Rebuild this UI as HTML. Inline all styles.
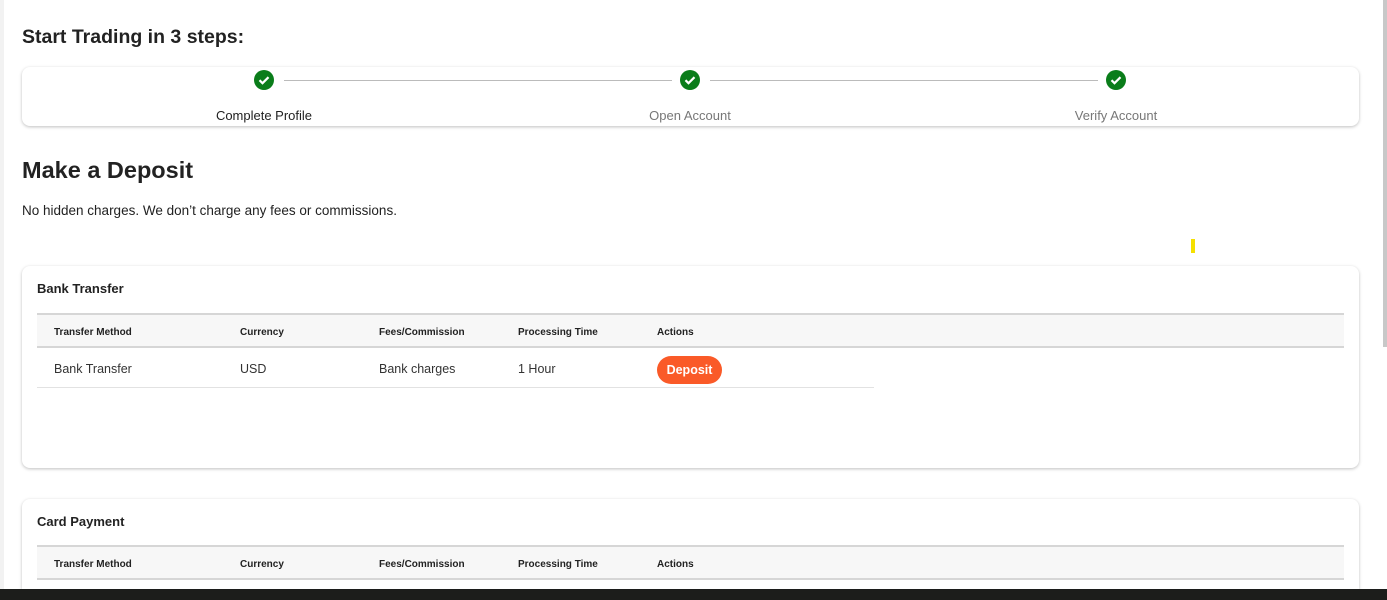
<!DOCTYPE html>
<html style="width:1387px;height:600px;overflow:hidden"><head><style>
*{box-sizing:border-box;margin:0;padding:0}
body{width:1387px;height:600px;overflow:hidden;background:#fff;font-family:"Liberation Sans",sans-serif;color:#222;position:relative}
.abs{position:absolute}
.card{position:absolute;background:#fff;border-radius:8px;box-shadow:0 1px 3px rgba(0,0,0,.25)}
.step{position:absolute;top:107px;font-size:13px;width:200px;text-align:center}
.th{position:absolute;font-size:10px;font-weight:bold;color:#222}
.td{position:absolute;font-size:12.5px;color:#333}
.thead{position:absolute;left:37px;width:1307px;height:35px;background:#f7f7f7;border-top:2px solid #d6d6d6;border-bottom:2px solid #d6d6d6}
</style></head><body>
<div class="abs" style="left:0;top:0;width:4px;height:600px;background:#f2f2f2"></div>
<div class="abs" style="left:22px;top:26px;font-size:19.5px;font-weight:bold;color:#222">Start Trading in 3 steps:</div>
<div class="card" style="left:22px;top:67px;width:1337px;height:59px"></div>
<div class="abs" style="left:284px;top:80px;width:388px;height:1px;background:#bbb"></div>
<div class="abs" style="left:710px;top:80px;width:388px;height:1px;background:#bbb"></div>
<svg class="abs" style="left:254px;top:70px" width="20" height="20"><circle cx="10" cy="10" r="10" fill="#0a7d1a"/><path d="M5.5 10.2l3 3 6-6" stroke="#fff" stroke-width="2.2" fill="none"/></svg>
<svg class="abs" style="left:680px;top:70px" width="20" height="20"><circle cx="10" cy="10" r="10" fill="#0a7d1a"/><path d="M5.5 10.2l3 3 6-6" stroke="#fff" stroke-width="2.2" fill="none"/></svg>
<svg class="abs" style="left:1106px;top:70px" width="20" height="20"><circle cx="10" cy="10" r="10" fill="#0a7d1a"/><path d="M5.5 10.2l3 3 6-6" stroke="#fff" stroke-width="2.2" fill="none"/></svg>
<div class="step" style="left:164px;color:#222;top:108px">Complete Profile</div>
<div class="step" style="left:590px;color:#777;top:108px">Open Account</div>
<div class="step" style="left:1016px;color:#777;top:108px">Verify Account</div>
<div class="abs" style="left:22px;top:157px;font-size:23.5px;font-weight:bold;color:#222">Make a Deposit</div>
<div class="abs" style="left:22px;top:203px;font-size:13.5px;color:#222">No hidden charges. We don’t charge any fees or commissions.</div>
<div class="abs" style="left:1191px;top:239px;width:4px;height:14px;background:#f5e000"></div>

<div class="card" style="left:22px;top:266px;width:1337px;height:202px"></div>
<div class="abs" style="left:37px;top:281px;font-size:13px;font-weight:bold">Bank Transfer</div>
<div class="thead" style="top:313px"></div>
<div class="th" style="left:54px;top:327px">Transfer Method</div>
<div class="th" style="left:240px;top:327px">Currency</div>
<div class="th" style="left:379px;top:327px">Fees/Commission</div>
<div class="th" style="left:518px;top:327px">Processing Time</div>
<div class="th" style="left:657px;top:327px">Actions</div>
<div class="td" style="left:54px;top:362px">Bank Transfer</div>
<div class="td" style="left:240px;top:362px">USD</div>
<div class="td" style="left:379px;top:362px">Bank charges</div>
<div class="td" style="left:518px;top:362px">1 Hour</div>
<div class="abs" style="left:657px;top:356px;width:65px;height:28px;border-radius:14px;background:#fa5a28;color:#fff;font-size:12.5px;font-weight:bold;text-align:center;line-height:28px">Deposit</div>
<div class="abs" style="left:37px;top:387px;width:837px;height:1px;background:#e2e2e2"></div>

<div class="card" style="left:22px;top:499px;width:1337px;height:90px;border-radius:8px 8px 0 0"></div>
<div class="abs" style="left:37px;top:514px;font-size:13px;font-weight:bold">Card Payment</div>
<div class="thead" style="top:545px"></div>
<div class="th" style="left:54px;top:559px">Transfer Method</div>
<div class="th" style="left:240px;top:559px">Currency</div>
<div class="th" style="left:379px;top:559px">Fees/Commission</div>
<div class="th" style="left:518px;top:559px">Processing Time</div>
<div class="th" style="left:657px;top:559px">Actions</div>

<div class="abs" style="left:1383px;top:0;width:4px;height:347px;background:#c8c8c8"></div>
<div class="abs" style="left:0;top:589px;width:1387px;height:11px;background:#1c1d1b"></div>
</body></html>
